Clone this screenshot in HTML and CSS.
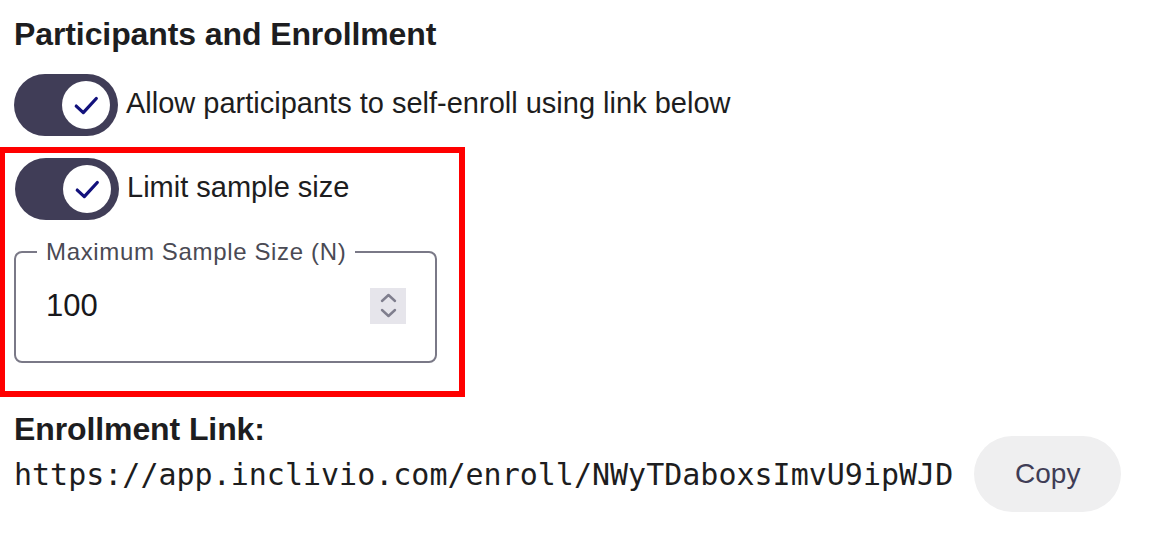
FILE: index.html
```html
<!DOCTYPE html>
<html lang="en">
<head>
<meta charset="utf-8">
<title>Participants and Enrollment</title>
<link rel="stylesheet" href="styles.css">
</head>
<body>
<main class="page">
  <h2 class="title">Participants and Enrollment</h2>

  <div class="switch-row first">
    <span class="switch"><span class="knob"><svg class="check" viewBox="0 0 24 24"><polyline points="3 13 9.5 19 21.5 6"/></svg></span></span>
    <span class="switch-label">Allow participants to self-enroll using link below</span>
  </div>

  <section class="highlight">
    <div class="switch-row">
      <span class="switch"><span class="knob"><svg class="check" viewBox="0 0 24 24"><polyline points="3 13 9.5 19 21.5 6"/></svg></span></span>
      <span class="switch-label">Limit sample size</span>
    </div>

    <fieldset class="field">
      <legend class="field-label">Maximum Sample Size (N)</legend>
      <div class="field-row">
        <span class="field-value">100</span>
        <span class="spinner"><svg viewBox="0 0 36 36"><polyline points="12 13 18.5 7 25 13"/><polyline points="12 22 18.5 28 25 22"/></svg></span>
      </div>
    </fieldset>
  </section>

  <h3 class="link-title">Enrollment Link:</h3>
  <div class="link-row">
    <span class="link-url">https://app.inclivio.com/enroll/NWyTDaboxsImvU9ipWJD</span>
    <button class="copy-btn" type="button">Copy</button>
  </div>
</main>
</body>
</html>
```

FILE: styles.css
```css
* { box-sizing: border-box; }

html, body {
  margin: 0;
  padding: 0;
  background: #ffffff;
}

body {
  font-family: "Liberation Sans", Arial, sans-serif;
  color: #1d1d20;
}

.page {
  display: flex;
  flex-direction: column;
  align-items: flex-start;
  padding: 16px 0 0 14px;
}

.title {
  margin: 0;
  font-size: 32px;
  font-weight: 700;
  line-height: 37px;
  letter-spacing: -0.1px;
}

.switch-row {
  display: flex;
  align-items: center;
  gap: 8px;
}

.switch-row.first {
  margin-top: 21px;
}

.switch {
  width: 104px;
  height: 62px;
  border-radius: 31px;
  background: #403d57;
  display: flex;
  align-items: center;
  justify-content: flex-end;
  padding-right: 8px;
  flex: none;
}

.knob {
  width: 48px;
  height: 48px;
  border-radius: 50%;
  background: #ffffff;
  display: flex;
  align-items: center;
  justify-content: center;
}

.check {
  width: 26px;
  height: 26px;
  fill: none;
  stroke: #12117c;
  stroke-width: 3;
  stroke-linecap: round;
  stroke-linejoin: round;
}

.switch-label {
  font-size: 29px;
  line-height: 34px;
  margin-top: -5px;
}

.highlight {
  margin: 11px 0 0 -15px;
  width: 466px;
  border: 6px solid #ff0000;
  padding: 5px 0 28px 10px;
  display: flex;
  flex-direction: column;
  align-items: flex-start;
}

.field {
  margin: 17px 0 0 -1px;
  width: 423px;
  border: 2px solid #7a7987;
  border-radius: 8px;
  padding: 0 29px 37px 21px;
}

.field-label {
  padding: 0 9px;
  font-size: 24px;
  line-height: 29px;
  color: #4a4a54;
  letter-spacing: 0.65px;
}

.field-row {
  display: flex;
  align-items: center;
  justify-content: space-between;
  margin-top: 22px;
  padding-left: 9px;
}

.field-value {
  font-size: 31px;
  line-height: 36px;
  color: #18181b;
}

.spinner {
  width: 36px;
  height: 36px;
  background: #e6e5eb;
  display: block;
}

.spinner svg {
  width: 36px;
  height: 36px;
  display: block;
  fill: none;
  stroke: #7f7e8d;
  stroke-width: 2.4;
  stroke-linecap: round;
  stroke-linejoin: round;
}

.link-title {
  margin: 16px 0 0 0;
  font-size: 32px;
  font-weight: 700;
  line-height: 32px;
  letter-spacing: -0.1px;
}

.link-row {
  display: flex;
  align-items: center;
  gap: 21px;
  margin-top: -9px;
}

.link-url {
  font-family: "DejaVu Sans Mono", "Liberation Mono", monospace;
  font-size: 30px;
  line-height: 35px;
  color: #1d1d20;
}

.copy-btn {
  width: 147px;
  height: 76px;
  border: none;
  border-radius: 38px;
  background: #efeff0;
  color: #3f3d56;
  font-family: "Liberation Sans", Arial, sans-serif;
  font-size: 28px;
  padding: 0;
  cursor: pointer;
}
```
